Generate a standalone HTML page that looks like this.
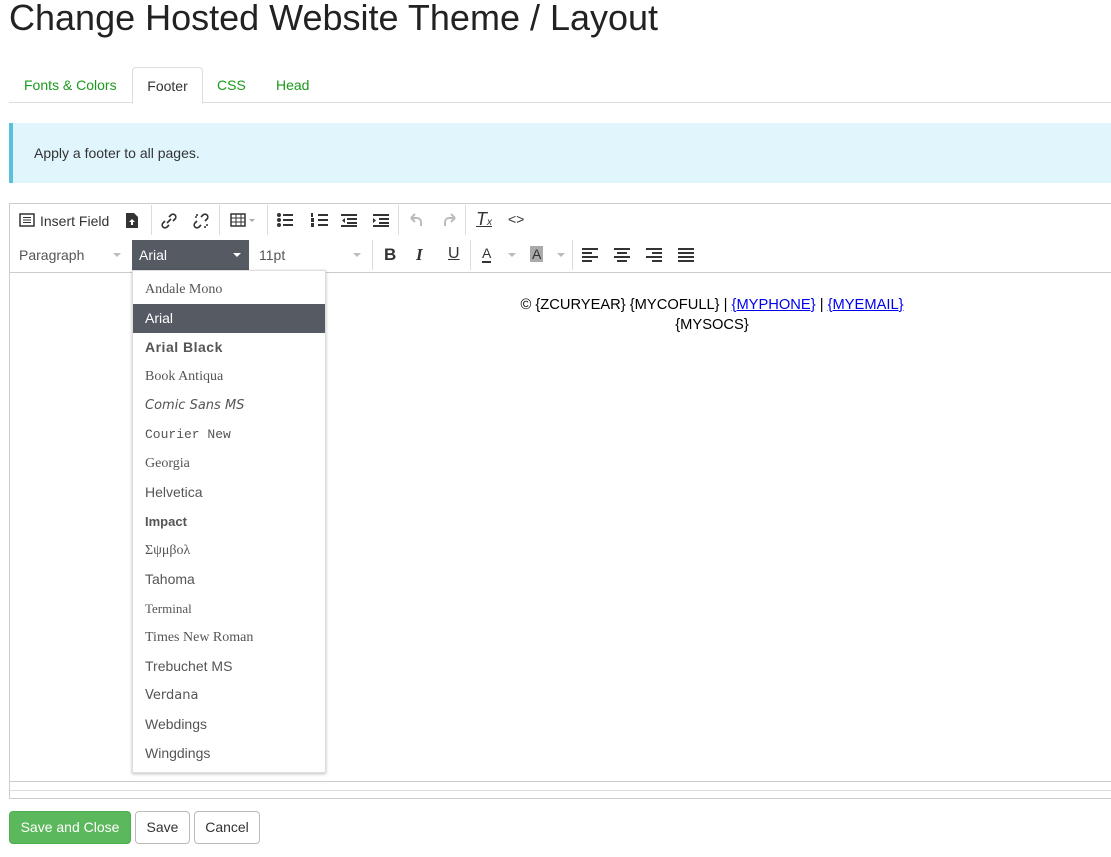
<!DOCTYPE html>
<html><head><meta charset="utf-8"><style>
body{margin:0;font-family:"Liberation Sans",Arial,sans-serif;color:#333;background:#fff;width:1111px;height:857px;overflow:hidden;position:relative;font-size:14px}
.abs{position:absolute}
h1{position:absolute;left:9px;top:-3px;margin:0;font-weight:400;font-size:36px;color:#222}
.tabs{position:absolute;left:9px;top:67px;width:1102px;height:35px;border-bottom:1px solid #ddd}
.tab{position:absolute;top:0;height:35px;line-height:36px;color:#1a9a1a;font-size:14px}
.tab.act{border:1px solid #ddd;border-bottom:1px solid #fff;border-radius:4px 4px 0 0;color:#333;background:#fff;height:35px;text-align:center}
.alert{position:absolute;left:9px;top:123px;width:1102px;height:60px;background:#e1f5fc;border-left:4px solid #5bc0de;box-sizing:border-box;padding-left:21px;line-height:61px;font-size:14px;color:#333}
.ed{position:absolute;left:9px;top:203px;width:1110px;height:596px;border:1px solid #ccc;box-sizing:border-box}
.sep{position:absolute;width:1px;background:#ddd}
.ico{position:absolute;font-size:14px;color:#333}
.dd{position:absolute;left:132px;top:270px;width:194px;height:503px;background:#fff;border:1px solid #ddd;box-shadow:0 1px 3px rgba(0,0,0,.25);box-sizing:border-box}
.it{position:absolute;left:0;width:192px;height:29px;line-height:29px;padding-left:12px;box-sizing:border-box;color:#555;font-size:14px}
.btn{position:absolute;top:811px;height:33px;line-height:31px;border:1px solid #bbb;border-radius:4px;box-sizing:border-box;text-align:center;font-size:14px;color:#333;background:#fff}
.caret{display:inline-block;width:0;height:0;border-left:4px solid transparent;border-right:4px solid transparent;border-top:4px solid #bbb;vertical-align:middle}
</style></head><body>
<h1>Change Hosted Website Theme / Layout</h1>
<div class="tabs">
<div class="tab" style="left:15px">Fonts &amp; Colors</div>
<div class="tab act" style="left:123px;width:69px">Footer</div>
<div class="tab" style="left:208px">CSS</div>
<div class="tab" style="left:267px">Head</div>
</div>
<div class="alert">Apply a footer to all pages.</div>
<div class="ed">
<div class="abs" style="left:0;top:68px;width:1110px;border-top:1px solid #ccc"></div>
<div class="abs" style="left:0;top:577px;width:1110px;border-top:1px solid #ccc"></div>
<div class="abs" style="left:0;top:586px;width:1110px;border-top:1px solid #ddd"></div>
</div>
<!-- toolbar row1 -->
<svg class="abs" style="left:19px;top:213px" width="16" height="14"><rect x="1" y="1" width="14" height="12" fill="none" stroke="#333" stroke-width="1.5"/><path d="M4 4.5h8M4 7h8M4 9.5h8" stroke="#333"/></svg>
<div class="ico" style="left:40px;top:213px">Insert Field</div>
<svg class="abs" style="left:125px;top:212px" width="14" height="17"><path d="M1 1h8l4 4v11H1z" fill="#333"/><path d="M7 7l-3 3h2v3h2v-3h2z" fill="#fff"/></svg>
<div class="sep" style="left:151px;top:205px;height:30px"></div>
<svg class="abs" style="left:160px;top:212px" width="18" height="18"><path d="M7 11l4-4M5 9l-2 2a2.5 2.5 0 0 0 4 4l2-2M13 9l2-2a2.5 2.5 0 0 0-4-4l-2 2" stroke="#333" stroke-width="1.6" fill="none"/></svg>
<svg class="abs" style="left:192px;top:212px" width="18" height="18"><path d="M5 9l-2 2a2.5 2.5 0 0 0 4 4l2-2M13 9l2-2a2.5 2.5 0 0 0-4-4l-2 2M3 5h2M5 2v2M13 14v2M14 13h2" stroke="#333" stroke-width="1.6" fill="none"/></svg>
<div class="sep" style="left:219px;top:205px;height:30px"></div>
<svg class="abs" style="left:230px;top:213px" width="30" height="14"><rect x="1" y="1" width="14" height="12" fill="none" stroke="#333" stroke-width="1.5"/><path d="M1 5h14M1 9h14M6 1v12M11 1v12" stroke="#333"/><path d="M19 6h6l-3 3z" fill="#aaa"/></svg>
<div class="sep" style="left:267px;top:205px;height:30px"></div>
<svg class="abs" style="left:276px;top:212px" width="120" height="16"><g fill="#333"><circle cx="3" cy="3" r="2"/><circle cx="3" cy="8" r="2"/><circle cx="3" cy="13" r="2"/><rect x="7" y="2" width="10" height="2"/><rect x="7" y="7" width="10" height="2"/><rect x="7" y="12" width="10" height="2"/>
<rect x="42" y="2" width="10" height="2"/><rect x="42" y="7" width="10" height="2"/><rect x="42" y="12" width="10" height="2"/><rect x="35" y="1" width="2" height="4"/><rect x="35" y="6" width="3" height="4"/><rect x="35" y="11" width="3" height="4"/>
<rect x="65" y="2" width="16" height="2"/><rect x="71" y="6" width="10" height="2"/><rect x="71" y="10" width="10" height="2"/><rect x="65" y="13" width="16" height="2"/><path d="M69 6v5l-3-2.5z"/>
<rect x="97" y="2" width="16" height="2"/><rect x="103" y="6" width="10" height="2"/><rect x="103" y="10" width="10" height="2"/><rect x="97" y="13" width="16" height="2"/><path d="M97 6v5l3-2.5z"/></g></svg>
<div class="sep" style="left:398px;top:205px;height:30px"></div>
<svg class="abs" style="left:408px;top:212px" width="50" height="16"><path d="M3 6h6a4 4 0 0 1 4 4v4M3 6l4-4M3 6l4 4" stroke="#bbb" stroke-width="2" fill="none"/><path d="M47 6h-6a4 4 0 0 0-4 4v4M47 6l-4-4M47 6l-4 4" stroke="#bbb" stroke-width="2" fill="none"/></svg>
<div class="sep" style="left:465px;top:205px;height:30px"></div>
<div class="ico" style="left:476px;top:209px;font-size:18px;font-style:italic;text-decoration:underline">T<span style="font-size:10px">x</span></div>
<div class="ico" style="left:508px;top:211px;font-size:14px">&lt;&gt;</div>
<!-- row2 -->
<div class="ico" style="left:19px;top:247px;color:#555">Paragraph</div>
<span class="caret abs" style="left:113px;top:253px"></span>
<div class="abs" style="left:132px;top:240px;width:117px;height:30px;background:#555a63"></div>
<div class="ico" style="left:139px;top:247px;color:#fff">Arial</div>
<span class="caret abs" style="left:233px;top:253px;border-top-color:#fff"></span>
<div class="ico" style="left:259px;top:247px;color:#555">11pt</div>
<span class="caret abs" style="left:353px;top:253px"></span>
<div class="sep" style="left:372px;top:240px;height:30px"></div>
<div class="ico" style="left:384px;top:245px;font-weight:bold;font-size:17px">B</div>
<div class="ico" style="left:416px;top:245px;font-style:italic;font-weight:bold;font-size:17px;font-family:'Liberation Serif',serif">I</div>
<div class="ico" style="left:448px;top:245px;font-size:16px;text-decoration:underline">U</div>
<div class="sep" style="left:470px;top:240px;height:30px"></div>
<div class="ico" style="left:482px;top:246px;font-size:14px;border-bottom:2px solid #333;line-height:15px">A</div>
<span class="caret abs" style="left:508px;top:253px"></span>
<div class="ico" style="left:530px;top:246px;font-size:14px;background:#aaa;line-height:16px;padding:0 2px">A</div>
<span class="caret abs" style="left:557px;top:253px"></span>
<div class="sep" style="left:572px;top:240px;height:30px"></div>
<svg class="abs" style="left:582px;top:247px" width="115" height="16"><g fill="#333"><rect x="0" y="1" width="16" height="2"/><rect x="0" y="5" width="10" height="2"/><rect x="0" y="9" width="16" height="2"/><rect x="0" y="13" width="10" height="2"/>
<rect x="32" y="1" width="16" height="2"/><rect x="35" y="5" width="10" height="2"/><rect x="32" y="9" width="16" height="2"/><rect x="35" y="13" width="10" height="2"/>
<rect x="64" y="1" width="16" height="2"/><rect x="70" y="5" width="10" height="2"/><rect x="64" y="9" width="16" height="2"/><rect x="70" y="13" width="10" height="2"/>
<rect x="96" y="1" width="16" height="2"/><rect x="96" y="5" width="16" height="2"/><rect x="96" y="9" width="16" height="2"/><rect x="96" y="13" width="16" height="2"/></g></svg>
<!-- content -->
<div class="abs" style="left:330px;top:295px;width:764px;text-align:center;color:#000;font-size:14.7px;line-height:20px">© {ZCURYEAR} {MYCOFULL} | <u style="color:#00e">{MYPHONE}</u> | <u style="color:#00e">{MYEMAIL}</u><br>{MYSOCS}</div>
<!-- dropdown -->
<div class="dd">
<div class="it" style="top:4px;font-family:'Liberation Serif',serif">Andale Mono</div>
<div class="it" style="top:33px;background:#555a63;color:#fff">Arial</div>
<div class="it" style="top:62px;font-weight:bold;letter-spacing:.5px">Arial Black</div>
<div class="it" style="top:91px;font-family:'Liberation Serif',serif">Book Antiqua</div>
<div class="it" style="top:120px;font-family:'DejaVu Sans',sans-serif;font-style:italic;font-size:13px">Comic Sans MS</div>
<div class="it" style="top:149px;font-family:'Liberation Mono',monospace;font-size:13px">Courier New</div>
<div class="it" style="top:178px;font-family:'Liberation Serif',serif">Georgia</div>
<div class="it" style="top:207px">Helvetica</div>
<div class="it" style="top:236px;font-weight:bold;font-size:13px">Impact</div>
<div class="it" style="top:265px;font-family:'Liberation Serif',serif">Σψμβολ</div>
<div class="it" style="top:294px">Tahoma</div>
<div class="it" style="top:323px;font-family:'Liberation Serif',serif;font-size:13px">Terminal</div>
<div class="it" style="top:352px;font-family:'Liberation Serif',serif">Times New Roman</div>
<div class="it" style="top:381px">Trebuchet MS</div>
<div class="it" style="top:410px;font-family:'DejaVu Sans',sans-serif;font-size:13px">Verdana</div>
<div class="it" style="top:439px">Webdings</div>
<div class="it" style="top:468px">Wingdings</div>
</div>
<div class="btn" style="left:9px;width:122px;background:#5cb85c;border-color:#4cae4c;color:#fff">Save and Close</div>
<div class="btn" style="left:135px;width:55px">Save</div>
<div class="btn" style="left:194px;width:66px">Cancel</div>
</body></html>
